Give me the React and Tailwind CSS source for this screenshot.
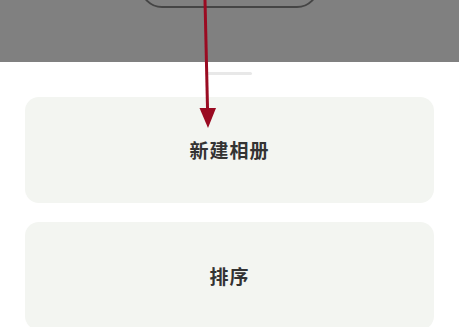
import React from 'react';

const Card = ({ label, className }) => (
    <div className={`mx-[25px] rounded-[14px] bg-[#f3f5f1] flex items-center justify-center ${className}`}>
        <span className="text-[19px] font-semibold tracking-[1px] text-[#333333]">{label}</span>
    </div>
);

const App = () => {
    return (
        <div
            className="relative w-full h-[327px] overflow-hidden bg-[#808080] flex flex-col"
            style={{ fontFamily: '"Noto Sans CJK SC", "Noto Sans", sans-serif' }}
        >
            {/* dimmed page behind the sheet */}
            <div className="h-[62px] shrink-0 flex justify-center">
                <div className="w-[179px] h-[44px] -mt-[36px] rounded-[22px] border-2 border-[#454545]" />
            </div>

            {/* bottom sheet */}
            <div className="flex-1 bg-white flex flex-col">
                <div className="mt-[10px] mx-auto w-[45px] h-[3px] rounded-full bg-[#e8e8e8]" />
                <Card label="新建相册" className="mt-[22px] h-[106px] shrink-0" />
                <Card label="排序" className="mt-[19px] h-[108px] shrink-0" />
            </div>

            {/* annotation arrow */}
            <svg className="absolute left-0 top-0" width="459" height="140" viewBox="0 0 459 140">
                <line x1="205" y1="0" x2="207.6" y2="112" stroke="#9a0b22" strokeWidth="3" />
                <polygon points="199.5,108 216,108 208,128" fill="#9a0b22" />
            </svg>
        </div>
    );
};

export default App;
